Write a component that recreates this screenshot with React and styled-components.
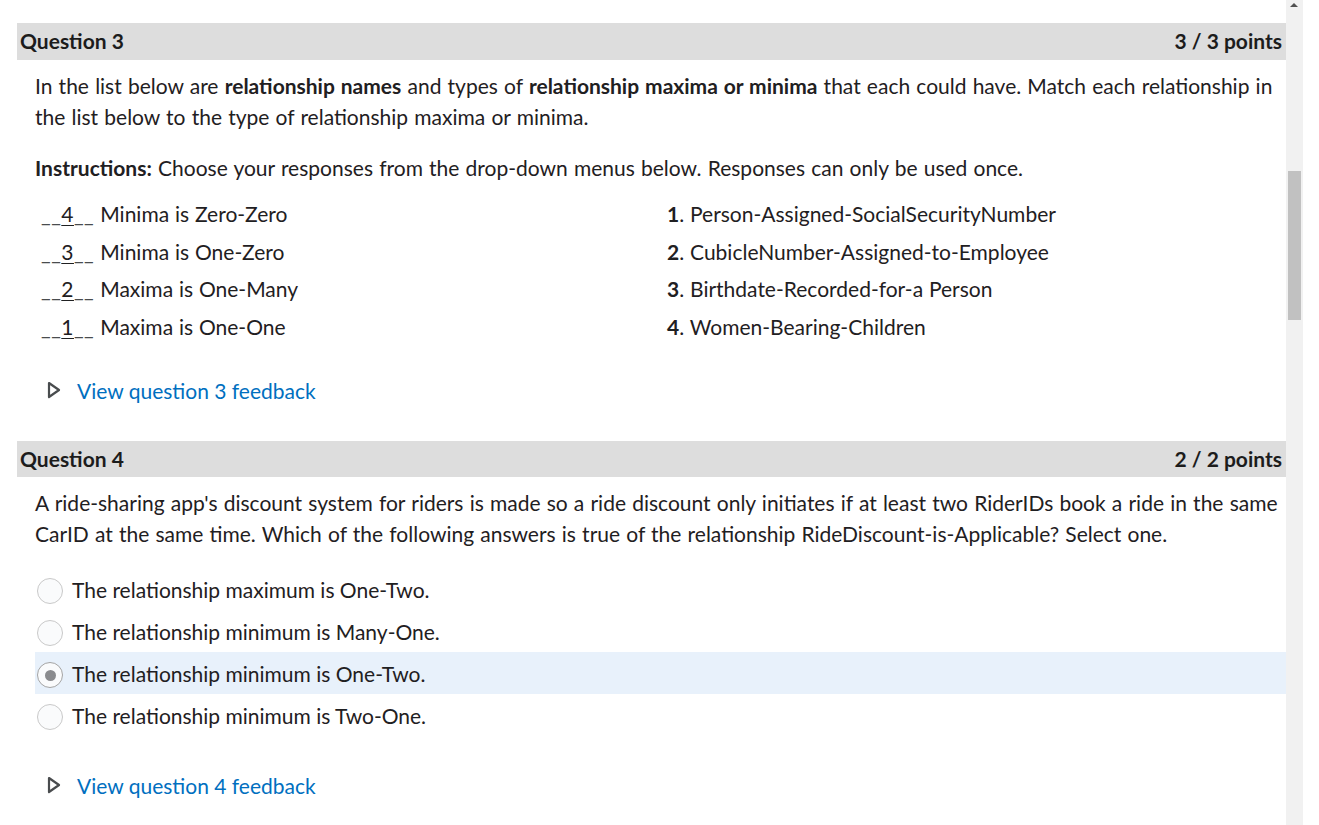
import React from "react";
import styled, { createGlobalStyle } from "styled-components";

const Global = createGlobalStyle`
  html, body { margin: 0; padding: 0; background: #fff; }
  body { font-family: Lato, "Noto Sans", sans-serif; color: #1f2022; }
  * { box-sizing: border-box; }
`;

const Page = styled.div`
  display: flex;
  width: 1319px;
  height: 825px;
  overflow: hidden;
  background: #fff;
`;

const Main = styled.main`
  width: 1286px;
  padding: 23px 0 0 17px;
  font-size: 21px;
  line-height: 31px;
`;

const ScrollTrack = styled.div`
  position: relative;
  width: 17px;
  height: 825px;
  background: #f1f1f1;
`;

const ScrollArrow = styled.div`
  position: absolute;
  top: 3px;
  left: 4px;
  width: 0;
  height: 0;
  border-left: 4px solid transparent;
  border-right: 4px solid transparent;
  border-bottom: 4px solid #505050;
`;

const ScrollThumb = styled.div`
  position: absolute;
  top: 171px;
  left: 2px;
  width: 13px;
  height: 149px;
  background: #c1c1c1;
`;

const Gutter = styled.div`
  width: 16px;
  background: #fff;
`;

const Section = styled.section`
  margin-bottom: ${(p) => p.$gap}px;
`;

const Header = styled.div`
  display: flex;
  justify-content: space-between;
  align-items: center;
  height: ${(p) => p.$h}px;
  background: #dddddd;
  padding: 0 4px 2px 3px;
  font-weight: 700;
  font-size: 21px;
  color: #1c1c1c;
`;

const Body = styled.div`
  padding-left: 18px;
`;

const Para = styled.p`
  margin: ${(p) => p.$top}px 0 0 0;
  line-height: 31px;
  word-spacing: 0.8px;
`;

const MatchGrid = styled.div`
  display: grid;
  grid-template-columns: 626px 1fr;
  grid-auto-rows: 37.5px;
  align-items: center;
  margin-top: 12.5px;
  padding-left: 6px;
  word-spacing: 0.5px;
`;

const Blank = styled.span`
  margin-right: 6px;
  color: #494c4e;
  letter-spacing: 0.5px;
  & u { color: #1f2022; text-decoration-thickness: 1px; text-underline-offset: 3px; }
`;

const Num = styled.b`
  font-weight: 700;
`;

const Feedback = styled.div`
  display: flex;
  align-items: center;
  margin-top: ${(p) => p.$top}px;
  padding-left: 12px;
  height: 31px;
  color: #006fbf;
`;

const Tri = styled.svg`
  width: 14px;
  height: 18px;
  margin-right: 16px;
`;

const Options = styled.div`
  margin-top: 19.5px;
`;

const Option = styled.label`
  display: flex;
  align-items: center;
  height: 42px;
  padding-left: 2px;
  background: ${(p) => (p.$selected ? "#e8f1fb" : "transparent")};
`;

const Radio = styled.span`
  display: inline-flex;
  align-items: center;
  justify-content: center;
  width: 26px;
  height: 26px;
  margin: 4px 9px 0 0;
  border-radius: 50%;
  border: 1.5px solid ${(p) => (p.$selected ? "#a4a4a4" : "#c9c9c9")};
  background: #fafbfc;
  &::after {
    content: "";
    display: ${(p) => (p.$selected ? "block" : "none")};
    width: 11px;
    height: 11px;
    border-radius: 50%;
    background: #8a8b8e;
  }
`;

const Triangle = () => (
  <Tri viewBox="0 0 14 18">
    <path d="M2 2 L12 9 L2 16 Z" fill="none" stroke="#494c4e" strokeWidth="2.2" strokeLinejoin="round" />
  </Tri>
);

const matches = [
  ["4", "Minima is Zero-Zero", "1", "Person-Assigned-SocialSecurityNumber"],
  ["3", "Minima is One-Zero", "2", "CubicleNumber-Assigned-to-Employee"],
  ["2", "Maxima is One-Many", "3", "Birthdate-Recorded-for-a Person"],
  ["1", "Maxima is One-One", "4", "Women-Bearing-Children"],
];

const options = [
  "The relationship maximum is One-Two.",
  "The relationship minimum is Many-One.",
  "The relationship minimum is One-Two.",
  "The relationship minimum is Two-One.",
];

export default function App() {
  return (
    <>
      <Global />
      <Page>
        <Main>
          <Section $gap={35.5}>
            <Header $h={37}>
              <span>Question 3</span>
              <span>3 / 3 points</span>
            </Header>
            <Body>
              <Para $top={9.5}>
                In the list below are <b>relationship names</b> and types of{" "}
                <b>relationship maxima or minima</b> that each could have. Match each relationship in the list
                below to the type of relationship maxima or minima.
              </Para>
              <Para $top={20}>
                <b>Instructions:</b> Choose your responses from the drop-down menus below. Responses can only be
                used once.
              </Para>
              <MatchGrid>
                {matches.map(([a, left, n, right]) => (
                  <React.Fragment key={n}>
                    <div>
                      <Blank>
                        __<u>{a}</u>__
                      </Blank>
                      {left}
                    </div>
                    <div>
                      <Num>{n}</Num>. {right}
                    </div>
                  </React.Fragment>
                ))}
              </MatchGrid>
              <Feedback $top={29.5}>
                <Triangle />
                View question 3 feedback
              </Feedback>
            </Body>
          </Section>
          <Section $gap={0}>
            <Header $h={36}>
              <span>Question 4</span>
              <span>2 / 2 points</span>
            </Header>
            <Body>
              <Para $top={9.5}>
                A ride-sharing app's discount system for riders is made so a ride discount only initiates if at
                least two RiderIDs book a ride in the same CarID at the same time. Which of the following answers
                is true of the relationship RideDiscount-is-Applicable? Select one.
              </Para>
            </Body>
            <Options>
              {options.map((o, i) => (
                <Body key={o}>
                  <Option $selected={i === 2}>
                    <Radio $selected={i === 2} />
                    {o}
                  </Option>
                </Body>
              ))}
            </Options>
            <Body>
              <Feedback $top={33.5}>
                <Triangle />
                View question 4 feedback
              </Feedback>
            </Body>
          </Section>
        </Main>
        <ScrollTrack>
          <ScrollArrow />
          <ScrollThumb />
        </ScrollTrack>
        <Gutter />
      </Page>
    </>
  );
}
